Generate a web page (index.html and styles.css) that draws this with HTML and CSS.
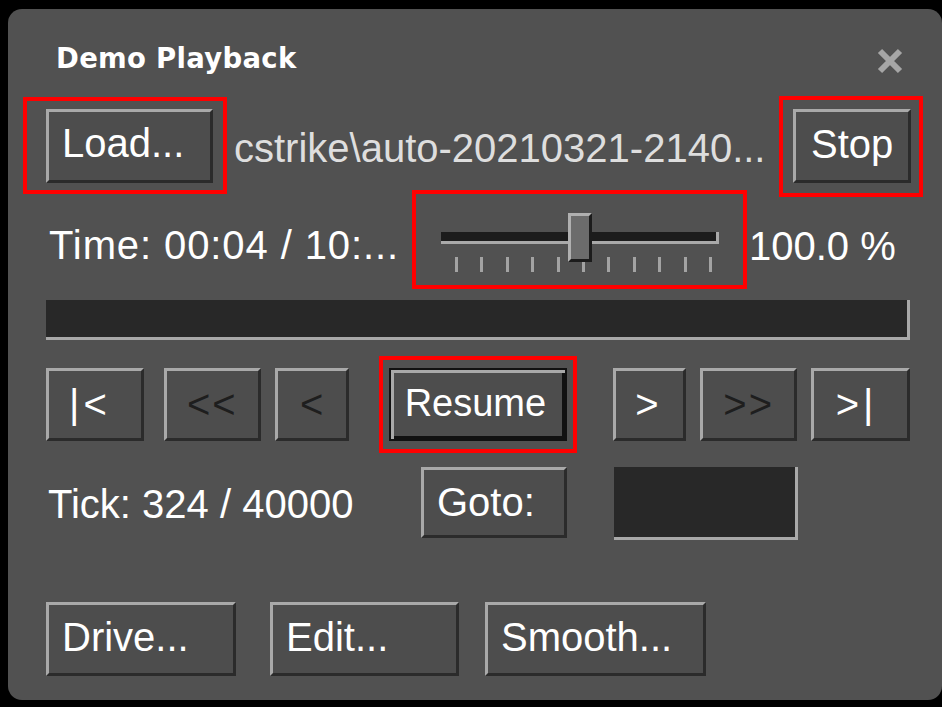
FILE: index.html
```html
<!DOCTYPE html>
<html lang="en">
<head>
  <meta charset="UTF-8" />
  <title>Demo Playback</title>
  <link rel="stylesheet" href="styles.css">
</head>
<body>
  <div class="dialog">
    <div class="header">
      <h1 class="title">Demo Playback</h1>
      <svg class="close" width="28" height="28" viewBox="0 0 28 28">
        <path d="M4 4 L24 24 M24 4 L4 24" stroke="#a6a6a6" stroke-width="6" fill="none" />
      </svg>
    </div>

    <div class="row row-file">
      <button class="btn btn-load mark mark-load">Load...</button>
      <span class="label file">cstrike\auto-20210321-2140...</span>
      <button class="btn btn-stop mark mark-stop">Stop</button>
    </div>

    <div class="row row-time">
      <span class="label time">Time: 00:04 / 10:...</span>
      <div class="slider mark">
        <div class="track"></div>
        <div class="ticks">
          <i></i><i></i><i></i><i></i><i></i><i></i><i></i><i></i><i></i><i></i><i></i>
        </div>
        <div class="thumb"></div>
      </div>
      <span class="label speed">100.0 %</span>
    </div>

    <div class="progress"></div>

    <div class="row row-transport">
      <button class="btn nav nav-first">|&lt;</button>
      <button class="btn nav nav-back off">&lt;&lt;</button>
      <button class="btn nav nav-prev off">&lt;</button>
      <button class="btn btn-resume mark mark-resume">Resume</button>
      <button class="btn nav nav-next">&gt;</button>
      <button class="btn nav nav-fwd off">&gt;&gt;</button>
      <button class="btn nav nav-last">&gt;|</button>
    </div>

    <div class="row row-tick">
      <span class="label tick">Tick: 324 / 40000</span>
      <button class="btn btn-goto">Goto:</button>
      <div class="field"></div>
    </div>

    <div class="row row-tools">
      <button class="btn btn-drive">Drive...</button>
      <button class="btn btn-edit">Edit...</button>
      <button class="btn btn-smooth">Smooth...</button>
    </div>
  </div>
</body>
</html>
```

FILE: styles.css
```css
* {
  margin: 0;
  padding: 0;
}
body {
  background: #000;
  width: 942px;
  height: 707px;
  overflow: hidden;
  font-family: "Liberation Sans", Arial, sans-serif;
}

.dialog {
  margin: 9px 0 0 8px;
  width: 934px;
  height: 691px;
  box-sizing: border-box;
  padding: 0 32px 0 38px;
  background: #515151;
  border-radius: 14px;
  display: flex;
  flex-direction: column;
}

.header {
  height: 100px;
  box-sizing: border-box;
  padding-top: 35px;
  display: flex;
  align-items: flex-start;
}
.title {
  flex: 1;
  margin-left: 10px;
  font: bold 27.5px/28px "DejaVu Sans", Verdana, sans-serif;
  color: #fff;
  letter-spacing: 0.3px;
}
.close {
  margin: 3px 6px 0 0;
}

.row {
  display: flex;
  align-items: center;
}
.label {
  font-size: 40px;
  line-height: 1;
  color: #fff;
  white-space: nowrap;
}

/* buttons */
.btn {
  box-sizing: border-box;
  height: 100%;
  display: flex;
  align-items: center;
  font: 40px/1 "Liberation Sans", Arial, sans-serif;
  color: #fff;
  background: #4d4d4d;
  border: 3px solid;
  border-color: #a9a9a9 #2b2b2b #2b2b2b #a9a9a9;
  padding: 0 0 4px 13px;
  text-align: left;
}

/* red highlight frames, offsets measured from the padding box */
.mark {
  position: relative;
}
.mark::after {
  content: "";
  position: absolute;
  border: 4px solid #f00;
  pointer-events: none;
}
.mark-load::after { top: -15px; right: -17px; bottom: -14px; left: -26px; }
.mark-stop::after { top: -16px; right: -15px; bottom: -17px; left: -17px; }
.mark-resume::after { top: -14px; right: -12px; bottom: -14px; left: -12px; }
.slider.mark::after { top: 0; right: 0; bottom: 0; left: 0; }

/* file row */
.row-file {
  height: 74px;
}
.btn-load {
  width: 167px;
  padding-bottom: 7px;
}
.file {
  margin-left: 21px;
  padding-top: 4px;
  color: #dedede;
}
.btn-stop {
  width: 118px;
  margin-left: auto;
  margin-right: -1px;
  padding-left: 15px;
  padding-bottom: 5px;
}

/* time row */
.row-time {
  height: 99px;
  margin-top: 7px;
}
.time {
  width: 363px;
  padding-left: 3px;
  padding-top: 11px;
  letter-spacing: 0.9px;
}
.speed {
  margin-left: 2px;
  padding-top: 13px;
}
.slider {
  width: 335px;
  height: 99px;
  box-sizing: border-box;
}
.track {
  margin: 42px 28px 0 29px;
  height: 12px;
  box-sizing: border-box;
  background: #1c1c1c;
  border-bottom: 3px solid #a9a9a9;
  border-right: 3px solid #a9a9a9;
}
.ticks {
  display: flex;
  justify-content: space-between;
  margin: 13px 35px 0 43px;
  height: 15px;
}
.ticks i {
  width: 3px;
  background: #a3a3a3;
}
.thumb {
  position: absolute;
  left: 156px;
  top: 23px;
  width: 24px;
  height: 49px;
  box-sizing: border-box;
  background: #6c6c6c;
  border: 3px solid;
  border-color: #b0b0b0 #1c1c1c #1c1c1c #b0b0b0;
}

/* progress */
.progress {
  margin-top: 11px;
  width: 864px;
  height: 40px;
  box-sizing: border-box;
  background: #282828;
  border-bottom: 3px solid #a9a9a9;
  border-right: 3px solid #a9a9a9;
}

/* transport */
.row-transport {
  height: 73px;
  margin-top: 28px;
}
.nav {
  justify-content: center;
  padding: 0 0 2px;
}
.nav.off {
  color: #1e1e1e;
}
.nav-first { width: 98px; padding-right: 10px; letter-spacing: 4px; }
.nav-back { width: 97px; margin-left: 20px; letter-spacing: 2px; }
.nav-prev { width: 74px; margin-left: 14px; }
.btn-resume {
  width: 179px;
  margin-left: 40px;
  padding-left: 14px;
  padding-bottom: 3px;
  font-size: 38px;
  border: 2px solid #111;
  box-shadow: inset 3px 3px 0 #a9a9a9, inset -3px -3px 0 #111;
}
.nav-next { width: 73px; margin-left: 46px; padding-right: 6px; }
.nav-fwd { width: 97px; margin-left: 14px; letter-spacing: 2px; }
.nav-last { width: 99px; margin-left: 14px; padding-right: 8px; letter-spacing: 4px; }

/* tick row */
.row-tick {
  height: 73px;
  margin-top: 26px;
}
.tick {
  width: 373px;
  padding-left: 2px;
}
.btn-goto {
  width: 146px;
  height: 71px;
  align-self: flex-start;
  padding-bottom: 1px;
}
.field {
  margin-left: 47px;
  width: 184px;
  height: 73px;
  box-sizing: border-box;
  background: #282828;
  border-bottom: 3px solid #a9a9a9;
  border-right: 3px solid #a9a9a9;
}

/* tools */
.row-tools {
  height: 74px;
  margin-top: 62px;
}
.btn-drive { width: 190px; }
.btn-edit { width: 189px; margin-left: 34px; }
.btn-smooth { width: 221px; margin-left: 26px; }
```
